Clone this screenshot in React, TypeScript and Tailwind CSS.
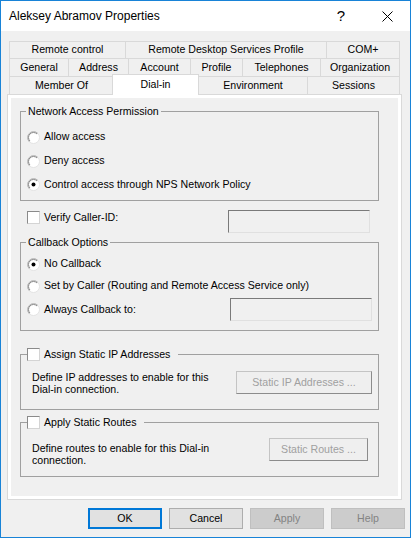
import React from "react";

type TabDef = { label: string; w: string; first?: boolean; selected?: boolean };

const rows: { h: string; tabs: TabDef[] }[] = [
  {
    h: "h-[17px]",
    tabs: [
      { label: "Remote control", w: "w-[117px]", first: true },
      { label: "Remote Desktop Services Profile", w: "w-[201px]" },
      { label: "COM+", w: "w-[73px]" },
    ],
  },
  {
    h: "h-[18px]",
    tabs: [
      { label: "General", w: "w-[60px]", first: true },
      { label: "Address", w: "w-[60px]" },
      { label: "Account", w: "w-[62px]" },
      { label: "Profile", w: "w-[52px]" },
      { label: "Telephones", w: "w-[78px]" },
      { label: "Organization", w: "w-[79px]" },
    ],
  },
  {
    h: "h-[18px]",
    tabs: [
      { label: "Member Of", w: "w-[105px]", first: true },
      { label: "Dial-in", w: "w-[85px]", selected: true },
      { label: "Environment", w: "w-[109px]" },
      { label: "Sessions", w: "w-[92px]" },
    ],
  },
];

function Tab({ tab }: { tab: TabDef }) {
  if (tab.selected) {
    return (
      <div className={`relative h-full ${tab.w}`}>
        <div className="absolute -top-[2px] -left-[2px] right-0 -bottom-[1px] z-10 flex items-center justify-center border-x border-t border-[#d9d9d9] bg-white">
          {tab.label}
        </div>
      </div>
    );
  }
  return (
    <div
      className={`flex h-full items-center justify-center border-t border-r border-[#d9d9d9] bg-[#f0f0f0] ${tab.w} ${
        tab.first ? "border-l" : ""
      }`}
    >
      {tab.label}
    </div>
  );
}

function Radio({ checked }: { checked?: boolean }) {
  return (
    <svg width="13" height="13" viewBox="0 0 13 13" className="shrink-0">
      <circle cx="6.5" cy="6.5" r="6" fill="#fff" stroke="#e3e3e3" />
      <path d="M2.26 10.74 A6 6 0 0 1 10.74 2.26" fill="none" stroke="#b4b4b4" />
      <path d="M2.96 10.04 A5 5 0 0 1 10.04 2.96" fill="none" stroke="#8a8a8a" />
      {checked && <circle cx="6.5" cy="6.5" r="2" fill="#000" />}
    </svg>
  );
}

function Check() {
  return (
    <span className="block h-[13px] w-[13px] shrink-0 border border-t-[#8a8a8a] border-l-[#8a8a8a] border-r-[#d4d4d4] border-b-[#d4d4d4] bg-white" />
  );
}

function TextBox({ w }: { w: string }) {
  return (
    <div
      className={`h-[23px] shrink-0 border border-t-[#7a7a7a] border-l-[#7a7a7a] border-r-[#e0e0e0] border-b-[#e0e0e0] bg-[#f0f0f0] ${w}`}
    />
  );
}

function SubButton({ label, w }: { label: string; w: string }) {
  return (
    <div
      className={`flex h-[23px] shrink-0 items-center justify-center border border-[#c4c4c4] border-r-[#8c8c8c] border-b-[#8c8c8c] bg-[#efefef] text-[#a0a0a0] ${w}`}
    >
      {label}
    </div>
  );
}

function DialogButton({ label, kind }: { label: string; kind: "default" | "normal" | "disabled" }) {
  const cls =
    kind === "default"
      ? "border-2 border-[#0078d7] bg-[#e1e1e1] text-black"
      : kind === "normal"
      ? "border border-[#adadad] bg-[#e1e1e1] text-black"
      : "border border-[#bfbfbf] bg-[#cccccc] text-[#838383]";
  return (
    <div className={`flex h-[21px] w-[74px] items-center justify-center ${cls}`}>{label}</div>
  );
}

export default function App() {
  return (
    <div className="flex h-[538px] w-[411px] flex-col border border-[#1883d7] bg-[#f0f0f0] font-['Liberation_Sans',Arial,sans-serif] text-[10.6px] text-black">
      {/* title bar */}
      <div className="flex h-[30px] shrink-0 items-center bg-white">
        <span className="pl-[8px] text-[12px]">Aleksey Abramov Properties</span>
        <div className="ml-auto flex h-full">
          <div className="flex w-[46px] items-center justify-center text-[15px]">?</div>
          <div className="flex w-[46px] items-center justify-center">
            <svg width="11" height="11" viewBox="0 0 11 11">
              <path d="M0.5 0.5 L10.5 10.5 M10.5 0.5 L0.5 10.5" stroke="#000" strokeWidth="1" />
            </svg>
          </div>
        </div>
      </div>

      {/* tabs */}
      <div className="ml-[8px] mt-[10px] flex flex-col">
        {rows.map((row, i) => (
          <div key={i} className={`flex ${row.h}`}>
            {row.tabs.map((t) => (
              <Tab key={t.label} tab={t} />
            ))}
          </div>
        ))}
      </div>

      {/* tab page */}
      <div className="ml-[6px] flex h-[406px] w-[395px] flex-col border border-[#d9d9d9] bg-white p-[3px]">
        <div className="flex flex-1 flex-col bg-[#f0f0f0] pt-[6px]">
          {/* Network Access Permission */}
          <fieldset className="ml-[9px] w-[359px] border border-[#a0a0a0] pt-[7px] pb-[4px]">
            <legend className="ml-[5px] px-[2px] leading-[14px]">Network Access Permission</legend>
            <div className="pl-[6px]">
              <div className="flex h-[24px] items-center gap-[4px]">
                <Radio />
                <span>Allow access</span>
              </div>
              <div className="flex h-[24px] items-center gap-[4px]">
                <Radio />
                <span>Deny access</span>
              </div>
              <div className="flex h-[23px] items-center gap-[4px]">
                <Radio checked />
                <span>Control access through NPS Network Policy</span>
              </div>
            </div>
          </fieldset>

          {/* Verify Caller-ID */}
          <div className="mt-[9px] flex h-[23px] items-start pl-[16px]">
            <div className="mt-[1px] flex h-[13px] w-[201px] items-center gap-[4px]">
              <Check />
              <span>Verify Caller-ID:</span>
            </div>
            <TextBox w="w-[142px]" />
          </div>

          {/* Callback Options */}
          <fieldset className="ml-[9px] mt-[2px] w-[359px] border border-[#a0a0a0] pt-[4px] pb-[8px]">
            <legend className="ml-[5px] px-[2px] leading-[14px]">Callback Options</legend>
            <div className="pl-[6px]">
              <div className="flex h-[22px] items-center gap-[4px]">
                <Radio checked />
                <span>No Callback</span>
              </div>
              <div className="flex h-[22px] items-center gap-[4px]">
                <Radio />
                <span>Set by Caller (Routing and Remote Access Service only)</span>
              </div>
              <div className="flex h-[25px] items-center">
                <div className="flex w-[203px] items-center gap-[4px]">
                  <Radio />
                  <span>Always Callback to:</span>
                </div>
                <TextBox w="w-[142px]" />
              </div>
            </div>
          </fieldset>

          {/* Assign Static IP Addresses */}
          <fieldset className="ml-[9px] mt-[16px] w-[359px] border border-[#a0a0a0] pt-[10px] pb-[14px]">
            <legend className="ml-[6px] pr-[8px] leading-[14px]">
              <span className="inline-flex h-[14px] items-center gap-[4px] align-top">
                <Check />
                <span>Assign Static IP Addresses</span>
              </span>
            </legend>
            <div className="flex items-start justify-between pl-[11px] pr-[6px]">
              <p className="leading-[12px]">
                Define IP addresses to enable for this
                <br />
                Dial-in connection.
              </p>
              <SubButton label="Static IP Addresses ..." w="w-[136px]" />
            </div>
          </fieldset>

          {/* Apply Static Routes */}
          <fieldset className="ml-[9px] mt-[5px] w-[359px] border border-[#a0a0a0] pt-[9px] pb-[10px]">
            <legend className="ml-[6px] pr-[8px] leading-[14px]">
              <span className="inline-flex h-[14px] items-center gap-[4px] align-top">
                <Check />
                <span>Apply Static Routes</span>
              </span>
            </legend>
            <div className="flex items-start justify-between pl-[11px] pr-[10px]">
              <p className="mt-[4px] leading-[12px]">
                Define routes to enable for this Dial-in
                <br />
                connection.
              </p>
              <SubButton label="Static Routes ..." w="w-[99px]" />
            </div>
          </fieldset>
        </div>
      </div>

      {/* dialog buttons */}
      <div className="mt-[8px] flex justify-end gap-[7px] pr-[5px]">
        <DialogButton label="OK" kind="default" />
        <DialogButton label="Cancel" kind="normal" />
        <DialogButton label="Apply" kind="disabled" />
        <DialogButton label="Help" kind="disabled" />
      </div>
    </div>
  );
}
